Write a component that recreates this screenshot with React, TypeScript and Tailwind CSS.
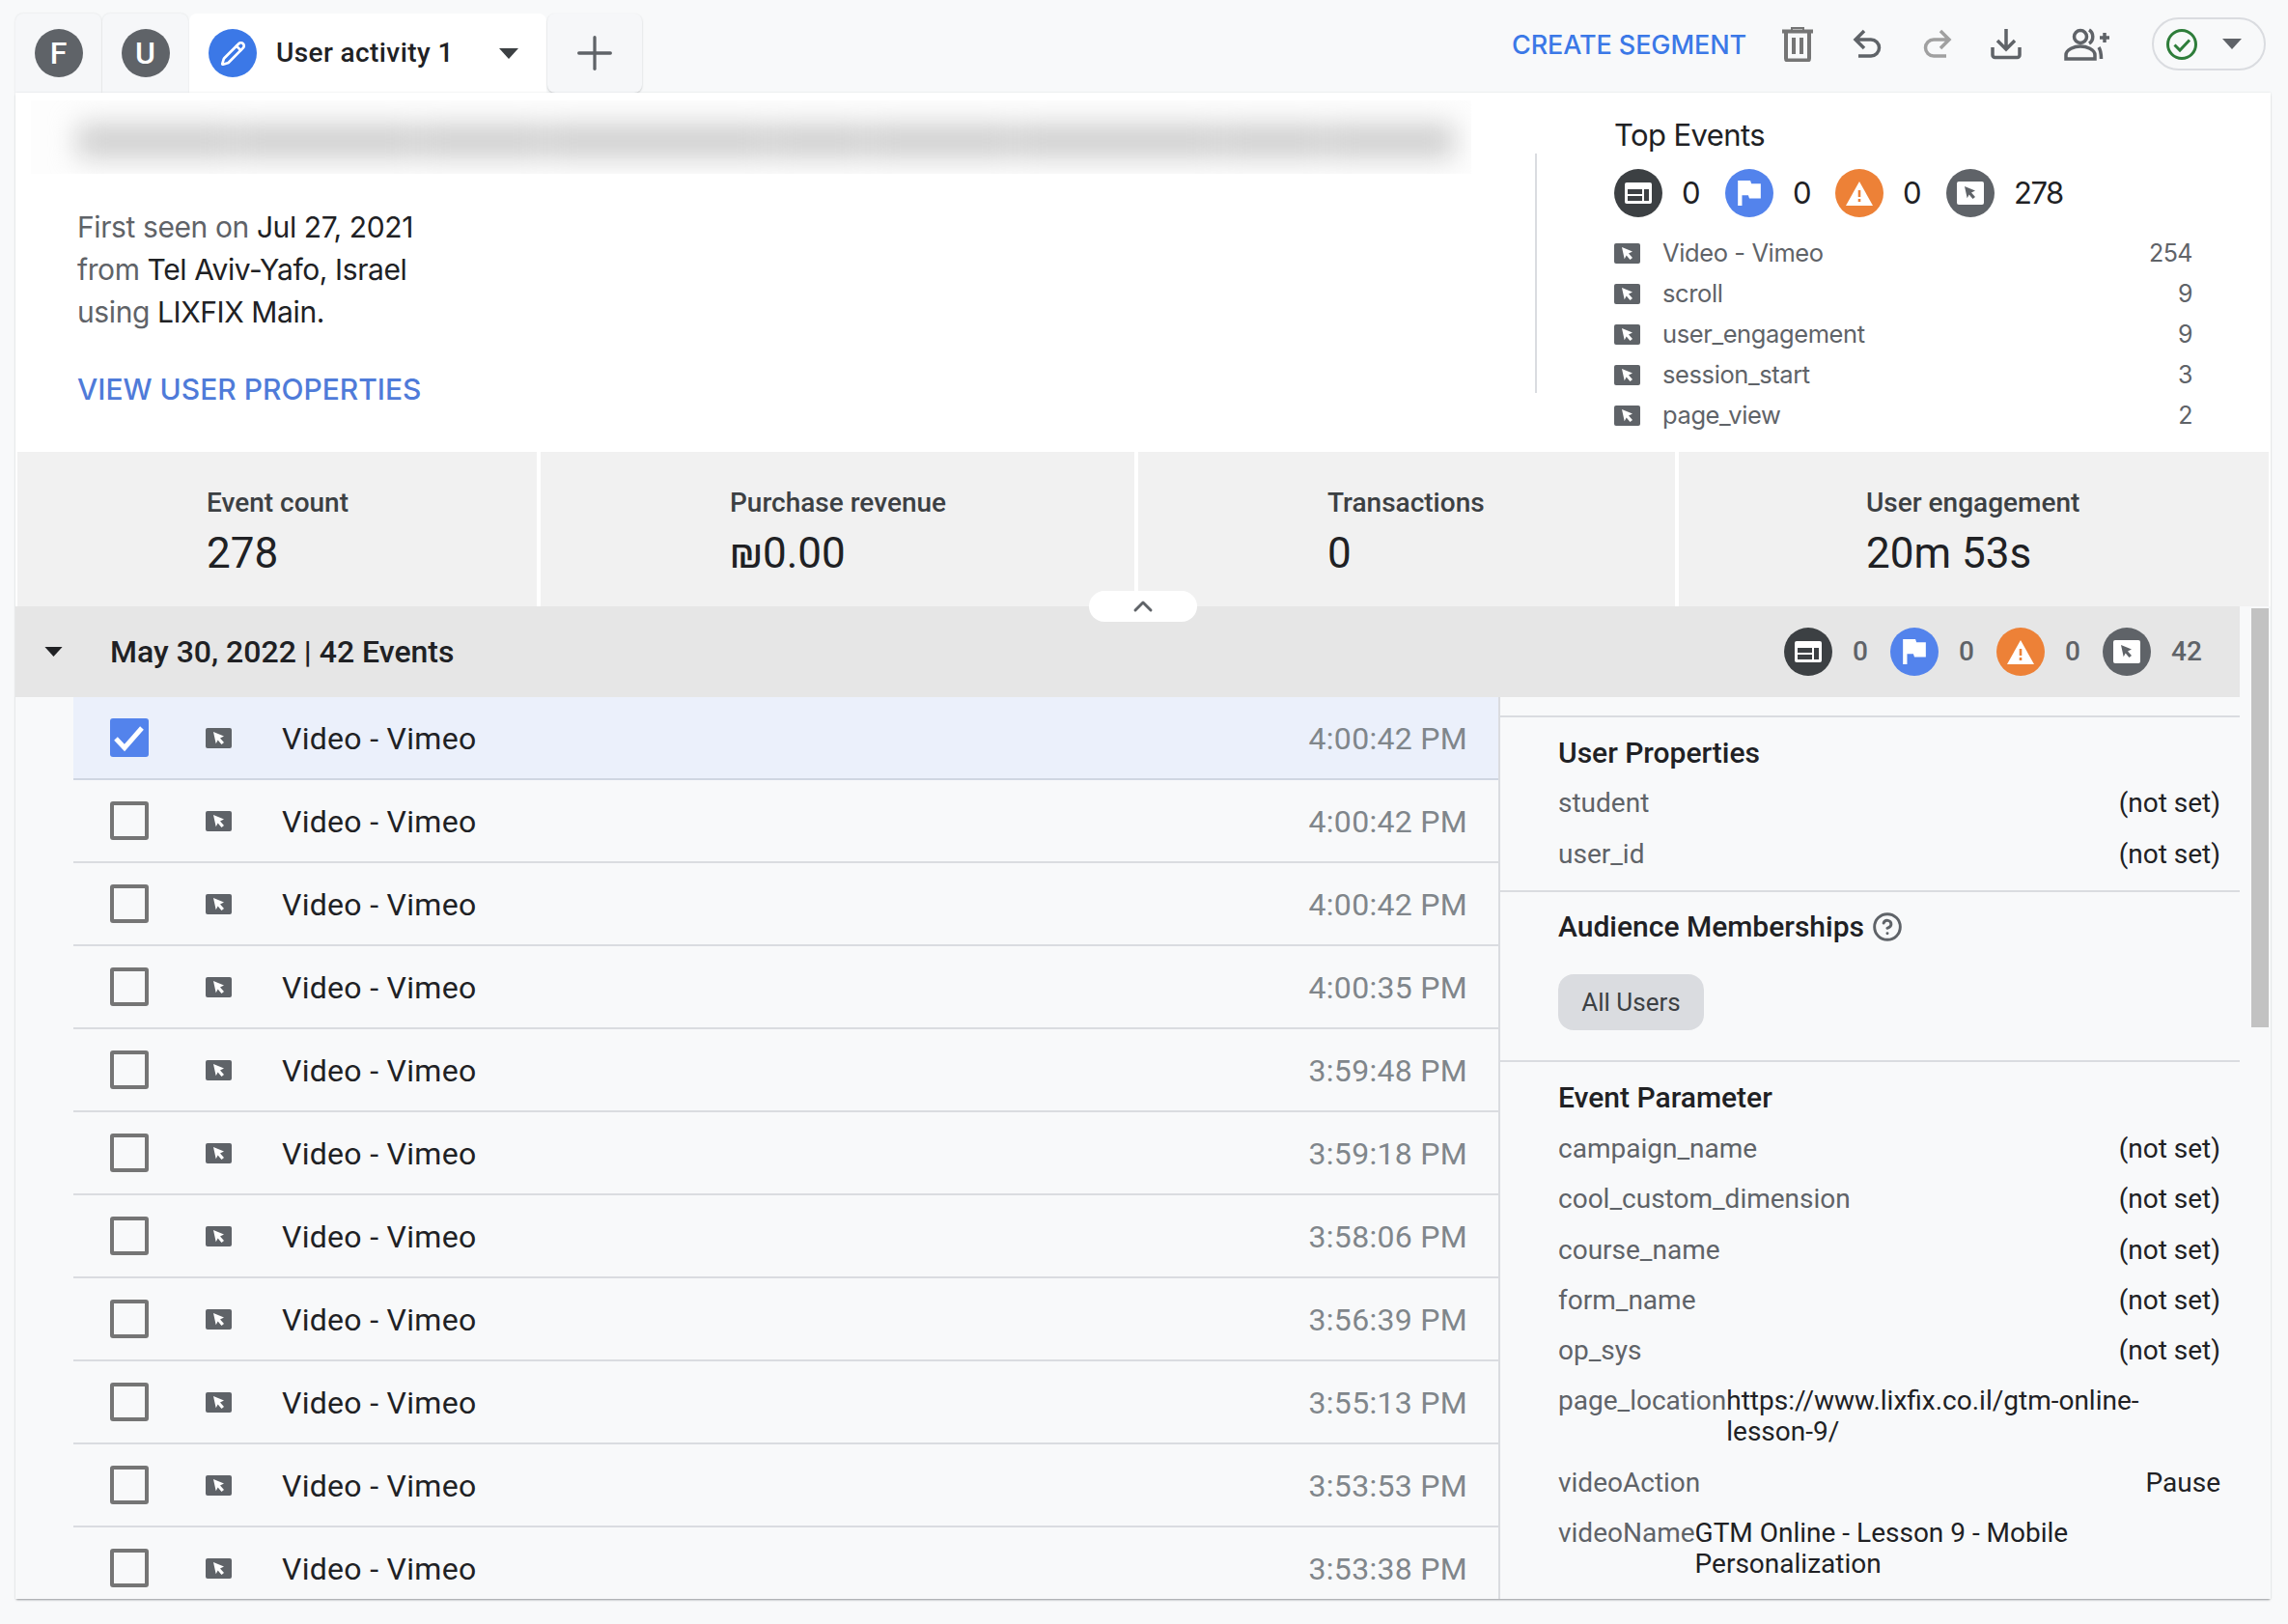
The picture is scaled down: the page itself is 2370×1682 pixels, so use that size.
import { ChevronUp, CircleHelp, Pencil, Plus } from "lucide-react";

type Counts = { text: string; num: string };

const topEvents = [
  ["Video - Vimeo", "254"],
  ["scroll", "9"],
  ["user_engagement", "9"],
  ["session_start", "3"],
  ["page_view", "2"],
];

const metrics = [
  { label: "Event count", value: "278", width: "w-[538px] pl-[196px]" },
  { label: "Purchase revenue", value: "₪0.00", width: "w-[615px] pl-[196px]" },
  { label: "Transactions", value: "0", width: "w-[556px] pl-[196px]" },
  { label: "User engagement", value: "20m 53s", width: "w-[611px] pl-[194px]" },
];

const blurWords = [
  "w-[160px]",
  "w-[190px]",
  "w-[130px]",
  "w-[230px]",
  "w-[100px]",
  "w-[150px]",
  "w-[210px]",
  "w-[110px]",
  "w-[130px]",
];

const times = [
  "4:00:42 PM",
  "4:00:42 PM",
  "4:00:42 PM",
  "4:00:35 PM",
  "3:59:48 PM",
  "3:59:18 PM",
  "3:58:06 PM",
  "3:56:39 PM",
  "3:55:13 PM",
  "3:53:53 PM",
  "3:53:38 PM",
];

const eventParams = [
  ["campaign_name", "(not set)"],
  ["cool_custom_dimension", "(not set)"],
  ["course_name", "(not set)"],
  ["form_name", "(not set)"],
  ["op_sys", "(not set)"],
  ["page_location", "https://www.lixfix.co.il/gtm-online-lesson-9/"],
  ["videoAction", "Pause"],
  ["videoName", "GTM Online - Lesson 9 - Mobile Personalization"],
];

const Caret = ({ className }: { className: string }) => (
  <svg viewBox="0 0 20 11" className={className}>
    <polygon points="0,0 20,0 10,11" fill="currentColor" />
  </svg>
);

const PageviewBadge = () => (
  <div className="w-[50px] h-[50px] rounded-full bg-[#3c4043] flex items-center justify-center shrink-0">
    <svg viewBox="0 0 28 22" className="w-[28px] h-[22px]">
      <rect width="28" height="22" rx="2" fill="#fff" />
      <rect x="3" y="7" width="15" height="5" fill="#3c4043" />
      <rect x="3" y="14" width="15" height="5" fill="#3c4043" />
      <rect x="20" y="7" width="5" height="12" fill="#3c4043" />
    </svg>
  </div>
);

const ConversionBadge = () => (
  <div className="w-[50px] h-[50px] rounded-full bg-[#5383ec] flex items-center justify-center shrink-0">
    <svg viewBox="0 0 24 26" className="w-[26px] h-[28px]">
      <path d="M1 1h12l1 3h9v14H12l-1-3H5v10H1z" fill="#fff" />
    </svg>
  </div>
);

const ErrorBadge = () => (
  <div className="w-[50px] h-[50px] rounded-full bg-[#ed8137] flex items-center justify-center shrink-0">
    <svg viewBox="0 0 28 25" className="w-[28px] h-[25px]">
      <path d="M14 0l14 25H0z" fill="#fff" />
      <rect x="12.7" y="9" width="2.6" height="7" fill="#ed8137" />
      <rect x="12.7" y="18" width="2.6" height="3" fill="#ed8137" />
    </svg>
  </div>
);

const CursorBadge = () => (
  <div className="w-[50px] h-[50px] rounded-full bg-[#5f6368] flex items-center justify-center shrink-0">
    <svg viewBox="0 0 28 24" className="w-[28px] h-[24px]">
      <rect width="28" height="24" rx="2" fill="#fff" />
      <path d="M8 5l11 4.5-4 2 4 4.5-2.5 2-3.8-4.6-2 3.8z" fill="#5f6368" />
    </svg>
  </div>
);

const CursorIcon = () => (
  <svg viewBox="0 0 27 21" className="w-[27px] h-[21px] shrink-0">
    <rect width="27" height="21" rx="2" fill="#5f6368" />
    <path d="M8 4l11 4.5-4 2 4 4.5-2.5 2-3.8-4.6-2 3.8z" fill="#fff" />
  </svg>
);

const Counters = ({ items, textClass }: { items: Counts[]; textClass: string }) => {
  const badges = [<PageviewBadge />, <ConversionBadge />, <ErrorBadge />, <CursorBadge />];
  return (
    <div className="flex items-center">
      {items.map((item, i) => (
        <div key={i} className={`flex items-center ${item.text}`}>
          {badges[i]}
          <span className={textClass}>{item.num}</span>
        </div>
      ))}
    </div>
  );
};

const Toolbar = () => (
  <div className="flex items-center mt-[18px] h-[55px] pr-[5px] text-[#5f6368]">
    <span className="mt-[3px] font-[Inter,sans-serif] font-medium text-[#3b78e7] text-[27px] tracking-[-0.1px]">
      CREATE SEGMENT
    </span>
    <svg viewBox="0 0 32 36" className="ml-[37px] w-[32px] h-[36px] text-[#757575]" fill="none" stroke="currentColor">
      <path d="M0 4.5h32" strokeWidth="4" />
      <path d="M10 3V1h12v2" strokeWidth="2" />
      <path d="M4 5v27.5a2 2 0 0 0 2 2h20a2 2 0 0 0 2-2V5" strokeWidth="4" />
      <path d="M12 11v17M20 11v17" strokeWidth="4" />
    </svg>
    <svg viewBox="0 0 32 32" className="ml-[41px] w-[32px] h-[32px]" fill="none" stroke="currentColor" strokeWidth="3.5">
      <path d="M12 2L3 11l9 9M3 11h16a8.5 8.5 0 0 1 0 17H6" />
    </svg>
    <svg viewBox="0 0 32 32" className="ml-[39px] w-[32px] h-[32px] text-[#a0a0a0]" fill="none" stroke="currentColor" strokeWidth="3.5">
      <path d="M20 2l9 9-9 9M29 11H13a8.5 8.5 0 0 0 0 17h13" />
    </svg>
    <svg viewBox="0 0 32 32" className="ml-[40px] w-[32px] h-[32px]" fill="none" stroke="currentColor" strokeWidth="3.5">
      <path d="M16 0v21M7 12l9 9 9-9M2 19v8a2.5 2.5 0 0 0 2.5 2.5h23A2.5 2.5 0 0 0 30 27v-8" />
    </svg>
    <svg viewBox="0 0 48 34" className="ml-[44px] w-[48px] h-[34px]" fill="none" stroke="currentColor" strokeWidth="3.5">
      <circle cx="17" cy="9" r="6.5" />
      <path d="M2 32v-4c0-6 9-9 15-9s15 3 15 9v4z" />
      <path d="M26 2c5 3 5 11 0 14M36 20c2 3 2.5 7 2.5 12M37 10h10M42 5v10" />
    </svg>
    <div className="ml-[43px] w-[118px] h-[55px] rounded-full border-2 border-[#dadce0] flex items-center pl-[13px]">
      <svg viewBox="0 0 32 32" className="w-[32px] h-[32px]" fill="none" stroke="#2e7d3a" strokeWidth="3">
        <circle cx="16" cy="16" r="14.5" />
        <path d="M8.5 16.5l5.5 5.5 10-10.5" />
      </svg>
      <Caret className="ml-[26px] w-[20px] h-[11px]" />
    </div>
  </div>
);

const Tabs = () => (
  <div className="flex items-end h-[96px]">
    <div className="w-[89px] h-[82px] mr-px rounded-t-lg bg-[#f6f7f9] shadow-[0_0_2px_rgba(60,64,67,0.15)] flex items-center justify-center">
      <div className="w-[50px] h-[50px] rounded-full bg-[#5f6368] text-white font-medium text-[32px] flex items-center justify-center">
        F
      </div>
    </div>
    <div className="w-[89px] h-[82px] mr-px rounded-t-lg bg-[#f6f7f9] shadow-[0_0_2px_rgba(60,64,67,0.15)] flex items-center justify-center">
      <div className="w-[50px] h-[50px] rounded-full bg-[#5f6368] text-white font-medium text-[32px] flex items-center justify-center">
        U
      </div>
    </div>
    <div className="w-[370px] h-[82px] rounded-t-lg bg-white flex items-center pl-[20px] pr-[29px]">
      <div className="w-[50px] h-[50px] rounded-full bg-[#3b78e7] text-white flex items-center justify-center">
        <Pencil size={27} strokeWidth={2.4} />
      </div>
      <span className="ml-[20px] text-[28px] font-medium tracking-[0.4px] text-[#202124]">User activity 1</span>
      <Caret className="ml-auto w-[20px] h-[11px] text-[#3c4043]" />
    </div>
    <div className="ml-px w-[98px] h-[82px] rounded-lg bg-[#f6f7f9] shadow-[0_1px_2px_rgba(60,64,67,0.25)] flex items-center justify-center text-[#5f6368]">
      <Plus size={56} strokeWidth={1.4} />
    </div>
  </div>
);

const Summary = () => (
  <div className="flex h-[372px]">
    <div className="w-[1574px] pt-2 pl-4 shrink-0">
      <div className="w-[1492px] h-[76px] bg-[#fdfdfd] overflow-hidden pt-[25px] pl-[48px]">
        <div className="flex w-[1426px] h-[34px] gap-[2px] blur-[14px]">
          {blurWords.map((w, i) => (
            <div key={i} className={`${w} h-full bg-[#cdcdcd]`} />
          ))}
        </div>
      </div>
      <div className="pl-[48px] mt-[33px] font-[Inter,sans-serif] text-[30px] leading-[44px] tracking-[-0.4px] text-[#5f6368]">
        <p>
          First seen on <span className="text-[#202124]">Jul 27, 2021</span>
        </p>
        <p>
          from <span className="text-[#202124]">Tel Aviv-Yafo, Israel</span>
        </p>
        <p>
          using <span className="text-[#202124]">LIXFIX Main.</span>
        </p>
        <p className="mt-[40px] leading-[36px] font-medium text-[#4f7bd9] tracking-[0px]">VIEW USER PROPERTIES</p>
      </div>
    </div>
    <div className="self-start mt-[63px] h-[248px] w-[2px] bg-[#dadce0] shrink-0" />
    <div className="ml-[80px] w-[599px] pt-[24px]">
      <h2 className="font-[Inter,sans-serif] text-[31px] leading-[40px] tracking-[-0.6px] text-[#202124]">Top Events</h2>
      <div className="mt-[15px]">
        <Counters
          textClass="ml-[20px] text-[31px] font-[Inter,sans-serif] tracking-[-1.5px] text-[#202124]"
          items={[
            { text: "w-[115px]", num: "0" },
            { text: "w-[114px]", num: "0" },
            { text: "w-[115px]", num: "0" },
            { text: "w-[121px]", num: "278" },
          ]}
        />
      </div>
      <div className="mt-[16px]">
        {topEvents.map(([name, count]) => (
          <div key={name} className="flex items-center h-[42px]">
            <CursorIcon />
            <span className="ml-[23px] font-[Inter,sans-serif] text-[25.5px] tracking-[-0.4px] text-[#5f6368]">{name}</span>
            <span className="mt-[2px] ml-auto font-[Inter,sans-serif] text-[25px] tracking-[-0.5px] text-[#5f6368]">{count}</span>
          </div>
        ))}
      </div>
    </div>
  </div>
);

const KeyValue = ({ name, value }: { name: string; value: string }) => (
  <div className="flex justify-between text-[28px] leading-[32px]">
    <span className="text-[#5f6368] shrink-0">{name}</span>
    <span className="text-[#202124]">{value}</span>
  </div>
);

const EventRow = ({ time, checked }: { time: string; checked: boolean }) => (
  <div
    className={`flex items-center h-[86px] pl-[38px] pr-[32px] border-b-2 ${
      checked ? "bg-[#ebf0fb] border-[#cfd6e2]" : "border-[#dadce0]"
    }`}
  >
    {checked ? (
      <div className="w-[40px] h-[40px] rounded-[3px] bg-[#5383ec] flex items-center justify-center shrink-0">
        <svg viewBox="0 0 40 40" className="w-[40px] h-[40px]" fill="none" stroke="#fff" strokeWidth="5">
          <path d="M6 21l9 9.5L33 10" />
        </svg>
      </div>
    ) : (
      <div className="w-[40px] h-[40px] rounded-[3px] border-4 border-[#757575] shrink-0" />
    )}
    <div className="ml-[59px]">
      <CursorIcon />
    </div>
    <span className="mt-[2px] ml-[52px] text-[32px] tracking-[0.3px] text-[#202124]">Video - Vimeo</span>
    <span className="mt-[2px] ml-auto text-[32px] tracking-[0.3px] text-[#80868b]">{time}</span>
  </div>
);

const DetailPanel = () => (
  <div className="w-[766px] pt-[19px] shrink-0">
    <div className="border-t-2 border-b-2 border-[#dadce0] pt-[19px] pb-[21px] pl-[60px] pr-[20px]">
      <h3 className="text-[30px] leading-[36px] font-medium text-[#202124]">User Properties</h3>
      <div className="mt-[18px] flex flex-col gap-[21px]">
        <KeyValue name="student" value="(not set)" />
        <KeyValue name="user_id" value="(not set)" />
      </div>
    </div>
    <div className="border-b-2 border-[#dadce0] pt-[18px] pb-[31px] pl-[60px] pr-[20px]">
      <div className="flex items-center">
        <h3 className="text-[30px] leading-[36px] font-medium text-[#202124]">Audience Memberships</h3>
        <CircleHelp size={32} strokeWidth={2.2} className="ml-[8px] text-[#5f6368]" />
      </div>
      <div className="mt-[31px] w-[151px] h-[58px] rounded-2xl bg-[#dadce0] flex items-center justify-center text-[26px] text-[#3c4043]">
        All Users
      </div>
    </div>
    <div className="pt-[19px] pl-[60px] pr-[20px]">
      <h3 className="text-[30px] leading-[36px] font-medium text-[#202124]">Event Parameter</h3>
      <div className="mt-[19px] flex flex-col gap-[20.3px]">
        {eventParams.map(([name, value]) => (
          <KeyValue key={name} name={name} value={value} />
        ))}
      </div>
    </div>
  </div>
);

const App = () => {
  return (
    <div className="w-[2370px] h-[1682px] bg-[#f8f9fa] pl-4 font-[Roboto,sans-serif] overflow-hidden">
      <div className="flex justify-between w-[2336px]">
        <Tabs />
        <Toolbar />
      </div>
      <div className="relative w-[2336px] h-[1560px] bg-white shadow-[0_2px_2px_-1px_rgba(60,64,67,0.5),0_0_2px_rgba(60,64,67,0.15)] overflow-hidden">
        <Summary />
        <div className="flex gap-[4px] h-[160px] px-[2px]">
          {metrics.map((m) => (
            <div key={m.label} className={`${m.width} bg-[#f1f1f1] pt-[35px]`}>
              <div className="text-[28px] leading-[36px] font-medium text-[#3c4043]">{m.label}</div>
              <div className="mt-[8px] text-[44px] leading-[52px] text-[#202124]">{m.value}</div>
            </div>
          ))}
        </div>
        {/* collapse handle sits over the metrics and date bar */}
        <div className="absolute left-[1112px] top-[516px] w-[112px] h-[32px] rounded-2xl bg-white flex items-center justify-center text-[#5f6368]">
          <ChevronUp size={32} strokeWidth={2.2} />
        </div>
        <div className="flex h-[1028px] bg-[#f8f9fa]">
          <div className="w-[2304px] shrink-0">
            <div className="flex items-center h-[94px] bg-[#e6e6e6] pl-[30px] pr-[40px]">
              <Caret className="w-[19px] h-[10px] text-[#202124]" />
              <span className="ml-[49px] text-[32px] font-medium text-[#202124]">May 30, 2022 | 42 Events</span>
              <div className="ml-auto">
                <Counters
                  textClass="ml-[21px] text-[28px] font-medium text-[#5f6368]"
                  items={[
                    { text: "w-[110px]", num: "0" },
                    { text: "w-[110px]", num: "0" },
                    { text: "w-[110px]", num: "0" },
                    { text: "w-[102px]", num: "42" },
                  ]}
                />
              </div>
            </div>
            <div className="flex h-[934px] overflow-hidden">
              <div className="w-[1538px] pl-[60px] border-r-2 border-[#dadce0] shrink-0">
                {times.map((t, i) => (
                  <EventRow key={i} time={t} checked={i === 0} />
                ))}
              </div>
              <DetailPanel />
            </div>
          </div>
          <div className="ml-[12px] mt-[2px] w-[18px] h-[434px] bg-[#c2c2c2]" />
        </div>
      </div>
    </div>
  );
};

export default App;
